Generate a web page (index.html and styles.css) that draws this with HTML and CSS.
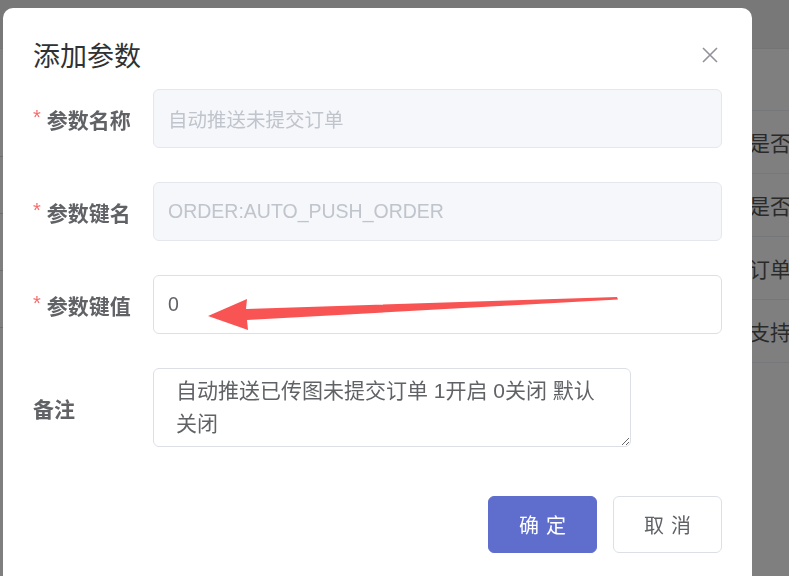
FILE: index.html
```html
<!DOCTYPE html>
<html lang="zh-CN">
<head>
<meta charset="utf-8">
<title>添加参数</title>
<link rel="stylesheet" href="styles.css">
</head>
<body>
<div class="page">
  <div class="topbar"></div>
  <div class="content">
    <div class="left-col">
      <div class="lrow"></div>
      <div class="lrow"></div>
      <div class="lrow"></div>
      <div class="lrow"></div>
    </div>
    <div class="table">
      <div class="trow thead"></div>
      <div class="trow"><span class="cell">是否允许</span></div>
      <div class="trow"><span class="cell">是否编辑</span></div>
      <div class="trow"><span class="cell">订单推送</span></div>
      <div class="trow"><span class="cell">支持编辑</span></div>
    </div>
  </div>
</div>

<div class="overlay">
  <div class="dialog">
    <div class="dialog-header">
      <span class="dialog-title">添加参数</span>
      <button class="close" aria-label="关闭">
        <svg width="16" height="16" viewBox="0 0 16 16"><path d="M1 1L15 15M15 1L1 15" stroke="#909399" stroke-width="1.6" fill="none"/></svg>
      </button>
    </div>
    <form class="form">
      <div class="form-item">
        <label class="label"><span class="req">*</span>参数名称</label>
        <input class="input disabled" type="text" value="自动推送未提交订单" disabled>
      </div>
      <div class="form-item">
        <label class="label"><span class="req">*</span>参数键名</label>
        <input class="input disabled" type="text" value="ORDER:AUTO_PUSH_ORDER" disabled>
      </div>
      <div class="form-item">
        <label class="label"><span class="req">*</span>参数键值</label>
        <input class="input" type="text" value="0">
      </div>
      <div class="form-item textarea-item">
        <label class="label">备注</label>
        <textarea class="textarea">自动推送已传图未提交订单 1开启 0关闭 默认关闭</textarea>
      </div>
    </form>
    <div class="footer">
      <button class="btn primary">确定</button>
      <button class="btn">取消</button>
    </div>
  </div>
  <svg class="arrow" width="789" height="576" viewBox="0 0 789 576">
    <polygon points="208,316 247,299 246,309 617,297 618,299.5 247,320 248,330" fill="#f95454"/>
  </svg>
</div>
</body>
</html>
```

FILE: styles.css
```css
* { box-sizing: border-box; }
html, body { margin: 0; padding: 0; }
body {
  width: 789px;
  height: 576px;
  overflow: hidden;
  font-family: "Liberation Sans", "Noto Sans CJK SC", sans-serif;
  background: #fff;
}
.page {
  height: 576px;
  overflow: hidden;
}
.topbar {
  height: 49px;
  background: #f1f1f2;
  border-bottom: 1px solid #e8e8ea;
}
.content {
  display: flex;
}
.left-col {
  width: 6px;
  padding-top: 51px;
}
.lrow {
  height: 57px;
  border-bottom: 1px solid #dcdcdc;
}
.table {
  flex: 1;
  padding-left: 743px;
  overflow: hidden;
}
.trow {
  height: 62px;
  border-bottom: 1px solid #ebeef5;
  display: flex;
  align-items: center;
  white-space: nowrap;
}
.thead { height: 62px; }
.trow + .trow { height: 63px; }
.cell {
  font-size: 21px;
  color: #555;
  font-family: "Noto Sans CJK SC", sans-serif;
}
.overlay {
  position: fixed;
  inset: 0;
  background: rgba(0, 0, 0, 0.5);
  padding: 8px 0 0 3px;
}
.arrow {
  position: absolute;
  left: 0;
  top: 0;
  pointer-events: none;
}
.dialog {
  width: 749px;
  height: 620px;
  background: #fff;
  border-radius: 10px;
}
.dialog-header {
  display: flex;
  align-items: flex-start;
  justify-content: space-between;
  padding: 30px 34px 0 30px;
  height: 81px;
}
.dialog-title {
  font-size: 27px;
  line-height: 34px;
  color: #303133;
  font-family: "Noto Sans CJK SC", sans-serif;
}
.close {
  border: 0;
  background: none;
  padding: 0;
  margin-top: 9px;
  width: 16px;
  height: 16px;
  display: flex;
}
.form {
  margin: 0;
}
.form-item {
  display: flex;
  align-items: center;
  height: 59px;
  margin-bottom: 34px;
}
.textarea-item {
  height: 79px;
  margin-bottom: 49px;
}
.label {
  width: 150px;
  padding-left: 30px;
  font-size: 21px;
  font-weight: bold;
  color: #606266;
  font-family: "Noto Sans CJK SC", sans-serif;
  display: flex;
  align-items: center;
}
.req {
  color: #f56c6c;
  font-family: "Liberation Sans", sans-serif;
  font-weight: normal;
  font-size: 20px;
  margin-right: 6px;
  margin-top: -3px;
}
.input {
  width: 569px;
  height: 59px;
  border: 1px solid #dcdfe6;
  border-radius: 6px;
  padding: 0 14px;
  font-size: 19.5px;
  color: #606266;
  font-family: "Liberation Sans", "Noto Sans CJK SC", sans-serif;
  background: #fff;
  outline: none;
}
.input.disabled {
  background: #f5f7fa;
  border-color: #e4e7ed;
  color: #c0c4cc;
  -webkit-text-fill-color: #c0c4cc;
  opacity: 1;
}
.textarea {
  width: 478px;
  height: 79px;
  border: 1px solid #dcdfe6;
  border-radius: 6px;
  padding: 5px 22px;
  font-size: 21px;
  line-height: 33px;
  color: #606266;
  font-family: "Liberation Sans", "Noto Sans CJK SC", sans-serif;
  resize: vertical;
  outline: none;
  overflow: hidden;
}
.footer {
  display: flex;
  justify-content: flex-end;
  gap: 16px;
  padding-right: 30px;
}
.btn {
  width: 109px;
  height: 57px;
  border: 1px solid #dcdfe6;
  border-radius: 6px;
  background: #fff;
  color: #606266;
  font-size: 20px;
  letter-spacing: 7px;
  padding: 0 0 0 7px;
  font-family: "Noto Sans CJK SC", sans-serif;
}
.btn.primary {
  background: #5f6ecd;
  border-color: #5f6ecd;
  color: #fff;
}
```
